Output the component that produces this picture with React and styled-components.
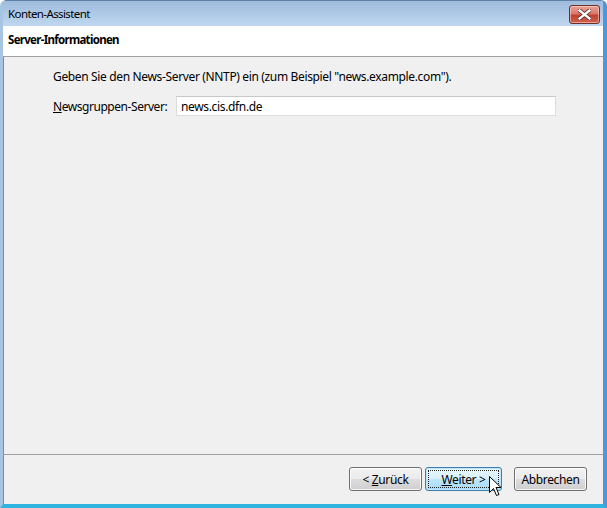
import React from 'react';
import styled, { createGlobalStyle, css } from 'styled-components';

const GlobalStyle = createGlobalStyle`
  html, body {
    margin: 0;
    padding: 0;
    background: #ffffff;
  }
  body {
    font-family: "Noto Sans", "Open Sans", sans-serif;
    font-size: 12px;
    letter-spacing: -0.35px;
    color: #000;
  }
`;

// outer window with the Aero-ish frame
const Window = styled.div`
  width: 607px;
  height: 508px;
  box-sizing: border-box;
  display: flex;
  flex-direction: column;
  border-left: 3px solid #a7c4e2;
  border-right: 4px solid #4f97d6;
  border-bottom: 4px solid #2fb3df;
  border-top-left-radius: 6px;
  border-top-right-radius: 6px;
  background: #f0f0f0;
  overflow: hidden;
  box-shadow: inset 1px 0 0 #6b8fb5;
`;

const TitleBar = styled.div`
  height: 26px;
  flex: none;
  display: flex;
  align-items: center;
  justify-content: space-between;
  padding: 0 3px 0 5px;
  background: linear-gradient(to bottom, #9fbcdd 0%, #afc9e6 50%, #bfd7ef 100%);
  border-top: 1px solid #5d7ea6;
  box-sizing: border-box;
`;

const TitleText = styled.span`
  font-size: 11.5px;
  letter-spacing: -0.6px;
  color: #000;
  padding-bottom: 1px;
`;

const CloseButton = styled.div`
  width: 29px;
  height: 17px;
  margin-top: 2px;
  border: 1px solid #6c2d2b;
  border-radius: 3px;
  background: linear-gradient(to bottom, #e8a497 0%, #d9786a 45%, #c3412e 55%, #d0614f 100%);
  box-shadow: inset 0 0 0 1px rgba(255, 220, 210, 0.55);
  display: flex;
  align-items: center;
  justify-content: center;
`;

const Header = styled.div`
  height: 31px;
  flex: none;
  box-sizing: border-box;
  background: #ffffff;
  border-bottom: 1px solid #a0a0a0;
  padding: 0 5px 4px;
  display: flex;
  align-items: center;
  font-weight: bold;
  font-size: 11.5px;
  letter-spacing: -0.7px;
`;

const Content = styled.div`
  flex: 1;
  padding: 12px 0 0 50px;
  display: flex;
  flex-direction: column;
  gap: 11px;
`;

const Description = styled.div`
  line-height: 16px;
`;

const FieldRow = styled.div`
  display: flex;
  align-items: center;
`;

const Label = styled.label`
  width: 123px;
  flex: none;
  letter-spacing: -0.45px;
`;

const TextInput = styled.div`
  width: 380px;
  height: 20px;
  box-sizing: border-box;
  background: #fff;
  border: 1px solid #dcdcdc;
  border-top-color: #c8c8c8;
  padding: 0 4px;
  display: flex;
  align-items: center;
`;

const Footer = styled.div`
  height: 50px;
  flex: none;
  box-sizing: border-box;
  border-top: 1px solid #a0a0a0;
  display: flex;
  justify-content: flex-end;
  align-items: flex-start;
  padding: 12px 16px 0 0;
`;

const ButtonGroup = styled.div`
  display: flex;
  gap: 3px;
  margin-right: 12px;
  position: relative;
`;

const Button = styled.div`
  width: 73px;
  height: 24px;
  box-sizing: border-box;
  border: 1px solid #707070;
  border-radius: 3px;
  background: linear-gradient(to bottom, #f2f2f2 0%, #ebebeb 48%, #dddddd 52%, #cfcfcf 100%);
  box-shadow: inset 0 0 0 1px rgba(255, 255, 255, 0.8);
  display: flex;
  align-items: center;
  justify-content: center;
  font-size: 12px;

  ${(p) =>
    p.$default &&
    css`
      width: 77px;
      border-color: #3c7fb1;
      background: linear-gradient(to bottom, #eaf6fd 0%, #d9f0fc 48%, #bee6fd 52%, #a7d9f5 100%);
      box-shadow: inset 0 0 0 1px #bfe5fb;
      position: relative;
      &::after {
        content: '';
        position: absolute;
        inset: 2px;
        border: 1px dotted #222;
      }
    `}
`;

const Mnemonic = styled.span`
  text-decoration: underline;
`;

const Cursor = styled.svg`
  position: absolute;
  left: 140px;
  top: 9px;
`;

export default function App() {
  return (
    <>
      <GlobalStyle />
      <Window>
        <TitleBar>
          <TitleText>Konten-Assistent</TitleText>
          <CloseButton>
            <svg width="13" height="11" viewBox="0 0 13 11">
              <path
                d="M1.5 1.5 L11.5 9.5 M11.5 1.5 L1.5 9.5"
                stroke="#5a2a24"
                strokeWidth="4"
                strokeLinecap="square"
              />
              <path
                d="M1.5 1.5 L11.5 9.5 M11.5 1.5 L1.5 9.5"
                stroke="#ffffff"
                strokeWidth="2.4"
                strokeLinecap="square"
              />
            </svg>
          </CloseButton>
        </TitleBar>
        <Header>Server-Informationen</Header>
        <Content>
          <Description>
            Geben Sie den News-Server (NNTP) ein (zum Beispiel "news.example.com").
          </Description>
          <FieldRow>
            <Label>
              <Mnemonic>N</Mnemonic>ewsgruppen-Server:
            </Label>
            <TextInput>news.cis.dfn.de</TextInput>
          </FieldRow>
        </Content>
        <Footer>
          <ButtonGroup>
            <Button>
              <span>
                &lt; <Mnemonic>Z</Mnemonic>urück
              </span>
            </Button>
            <Button $default>
              <span>
                <Mnemonic>W</Mnemonic>eiter &gt;
              </span>
            </Button>
            <Cursor width="13" height="21" viewBox="0 0 13 21">
              <path
                d="M0.5 0.5 L0.5 16.5 L4.5 12.5 L7.5 19.5 L10 18.5 L7 11.5 L12 11.5 Z"
                fill="#ffffff"
                stroke="#000000"
                strokeWidth="1"
                strokeLinejoin="miter"
              />
            </Cursor>
          </ButtonGroup>
          <Button>Abbrechen</Button>
        </Footer>
      </Window>
    </>
  );
}
